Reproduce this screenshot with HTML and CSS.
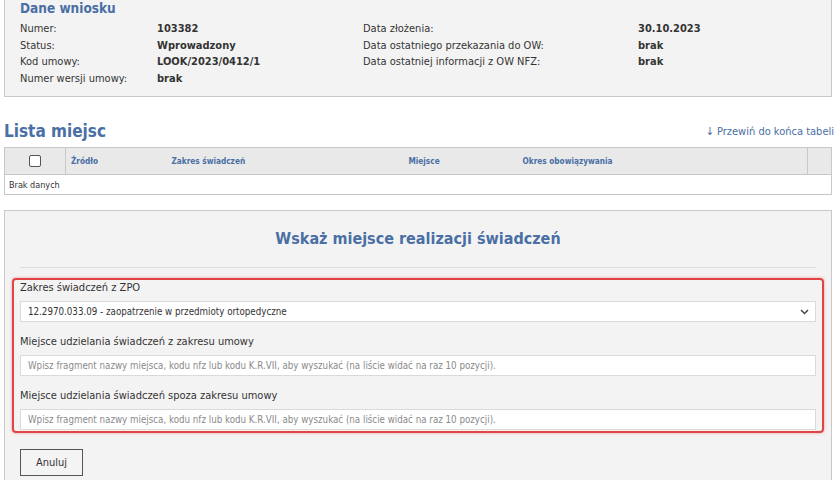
FILE: index.html
```html
<!DOCTYPE html>
<html lang="pl">
<head>
    <meta charset="UTF-8">
    <title>Wniosek - miejsca</title>
    <link rel="stylesheet" href="styles.css">
</head>
<body>
    <div class="page">
        <div class="panel info">
            <h2>Dane wniosku</h2>
            <div class="info-grid">
                <span>Numer:</span><b>103382</b>
                <span>Data złożenia:</span><b>30.10.2023</b>
                <span>Status:</span><b>Wprowadzony</b>
                <span>Data ostatniego przekazania do OW:</span><b>brak</b>
                <span>Kod umowy:</span><b>LOOK/2023/0412/1</b>
                <span>Data ostatniej informacji z OW NFZ:</span><b>brak</b>
                <span>Numer wersji umowy:</span><b>brak</b>
                <span></span><span></span>
            </div>
        </div>

        <div class="list-head">
            <h2>Lista miejsc</h2>
            <a href="#" class="scroll-link">&darr; Przewiń do końca tabeli</a>
        </div>
        <table class="grid">
            <thead>
                <tr>
                    <th class="col-check"><span class="checkbox"></span></th>
                    <th class="col-src">Źródło</th>
                    <th class="col-range">Zakres świadczeń</th>
                    <th class="col-place">Miejsce</th>
                    <th class="col-period">Okres obowiązywania</th>
                    <th class="col-end"></th>
                </tr>
            </thead>
            <tbody>
                <tr>
                    <td colspan="6">Brak danych</td>
                </tr>
            </tbody>
        </table>

        <div class="panel form-panel">
            <h3>Wskaż miejsce realizacji świadczeń</h3>
            <div class="fields">
                <label for="zakres">Zakres świadczeń z ZPO</label>
                <div class="select">
                    <span>12.2970.033.09 - zaopatrzenie w przedmioty ortopedyczne</span>
                    <svg width="9" height="6" viewBox="0 0 9 6"><path d="M1 1l3.5 3.5 3.5-3.5" fill="none" stroke="#444" stroke-width="1.5"/></svg>
                </div>

                <label for="miejsce1">Miejsce udzielania świadczeń z zakresu umowy</label>
                <input type="text" id="miejsce1" placeholder="Wpisz fragment nazwy miejsca, kodu nfz lub kodu K.R.VII, aby wyszukać (na liście widać na raz 10 pozycji).">

                <label for="miejsce2">Miejsce udzielania świadczeń spoza zakresu umowy</label>
                <input type="text" id="miejsce2" placeholder="Wpisz fragment nazwy miejsca, kodu nfz lub kodu K.R.VII, aby wyszukać (na liście widać na raz 10 pozycji).">
            </div>
            <button type="button" class="button">Anuluj</button>
        </div>
    </div>
</body>
</html>
```

FILE: styles.css
```css
* {
    margin: 0;
    padding: 0;
    box-sizing: border-box;
}
body {
    background: #ffffff;
    color: #333;
    font-family: 'DejaVu Sans Condensed', 'DejaVu Sans', sans-serif;
    font-size: 11px;
}
.page {
    padding: 0 8px 0 4px;
}
.panel {
    background: #f4f3f3;
    border: 1px solid #c8c8c8;
}
.info {
    border-top: none;
    padding: 0 16px 9px 15px;
}
.info h2 {
    color: #4a6fa5;
    font-size: 13.5px;
    line-height: 17px;
    margin-bottom: 4px;
}
.info-grid {
    display: grid;
    grid-template-columns: 137px 206px 275px 1fr;
    line-height: 16.5px;
}
.info-grid b {
    color: #333;
}
.list-head {
    display: flex;
    justify-content: space-between;
    align-items: center;
    margin-top: 24px;
    height: 20px;
}
.list-head h2 {
    color: #4a6fa5;
    font-size: 17px;
}
.scroll-link {
    color: #4a6fa5;
    text-decoration: none;
    font-size: 11px;
    margin-right: -2px;
}
.grid {
    width: 100%;
    border-collapse: collapse;
    margin-top: 6px;
    border: 1px solid #c8c8c8;
}
.grid th {
    background: #e9e9e9;
    color: #4a6fa5;
    font-size: 8.2px;
    text-align: left;
    height: 27px;
    border-bottom: 1px solid #c8c8c8;
}
.grid .col-check {
    width: 61px;
    text-align: center;
    border-right: 1px solid #c8c8c8;
}
.col-src {
    width: 106px;
    padding-left: 5px;
}
.col-range {
    width: 237px;
}
.col-place {
    width: 114px;
}
.grid .col-end {
    width: 24px;
    border-left: 1px solid #c8c8c8;
}
.checkbox {
    display: inline-block;
    width: 12px;
    height: 12px;
    border: 1px solid #555;
    border-radius: 2px;
    background: #fff;
    vertical-align: middle;
}
.grid td {
    background: #fff;
    font-size: 9px;
    height: 20px;
    padding-left: 4px;
}
.form-panel {
    margin-top: 15px;
    padding: 0 15px 5px 15px;
}
.form-panel h3 {
    color: #4a6fa5;
    font-size: 16px;
    text-align: center;
    line-height: 20px;
    padding: 18px 0 18px;
    border-bottom: 1px solid #dcdcdc;
}
.fields {
    margin: 10px -8px 0 -8px;
    padding: 0 6px 1px 6px;
    border: 2px solid #e04444;
    border-radius: 4px;
    box-shadow: 0 0 3px rgba(224, 68, 68, 0.5);
}
.fields label {
    display: block;
    line-height: 15px;
    margin-top: 5px;
    margin-bottom: 6px;
}
.fields label:first-child {
    margin-top: 0;
}
.fields label + .select,
.fields label + input {
    margin-bottom: 12px;
}
.select,
.fields input {
    display: flex;
    align-items: center;
    justify-content: space-between;
    width: 100%;
    height: 21px;
    background: #fff;
    border: 1px solid #dadada;
    padding: 0 6px 0 7px;
    font-family: inherit;
    font-size: 9.7px;
    color: #333;
}
.fields input:last-child {
    margin-bottom: 0;
}
.fields input::placeholder {
    color: #8a8a8a;
}
.button {
    margin-top: 16px;
    padding: 0;
    width: 63px;
    height: 27px;
    background: #f4f4f4;
    border: 1px solid #555;
    font-family: inherit;
    font-size: 11px;
    color: #333;
}
```
